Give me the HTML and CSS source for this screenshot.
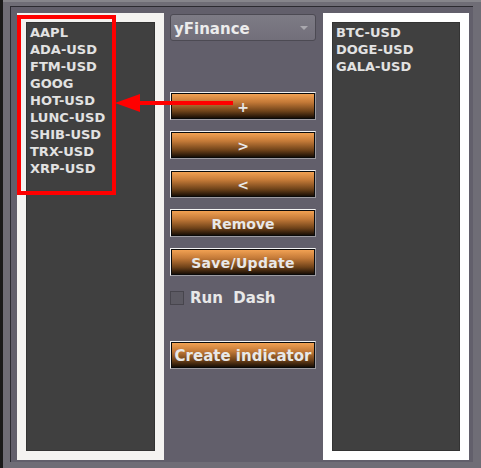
FILE: index.html
```html
<!DOCTYPE html>
<html>
<head>
<meta charset="utf-8">
<link rel="stylesheet" href="styles.css">
</head>
<body>
<div class="screen">
  <div class="edge"></div>
  <div class="frame">
    <div class="main">
      <div class="panel panel-left">
        <div class="list">
          <div>AAPL</div>
          <div>ADA-USD</div>
          <div>FTM-USD</div>
          <div>GOOG</div>
          <div>HOT-USD</div>
          <div>LUNC-USD</div>
          <div>SHIB-USD</div>
          <div>TRX-USD</div>
          <div>XRP-USD</div>
        </div>
      </div>
      <div class="middle">
        <div class="combo">
          <span>yFinance</span>
          <svg class="caret" width="8" height="5" viewBox="0 0 8 5"><polygon points="0,0 8,0 4,4" fill="#a9a8ae"/></svg>
        </div>
        <button class="btn first">+</button>
        <button class="btn">&gt;</button>
        <button class="btn">&lt;</button>
        <button class="btn">Remove</button>
        <button class="btn mono">Save/Update</button>
        <label class="check"><span class="box"></span><span>Run&nbsp; Dash</span></label>
        <button class="btn create">Create indicator</button>
      </div>
      <div class="panel panel-right">
        <div class="list">
          <div>BTC-USD</div>
          <div>DOGE-USD</div>
          <div>GALA-USD</div>
        </div>
      </div>
    </div>
  </div>
  <div class="redbox"></div>
  <div class="redline"></div>
  <svg class="redhead" width="26" height="20" viewBox="0 0 26 20"><polygon points="0,10 25,1 25,19" fill="#ff0000"/></svg>
</div>
</body>
</html>
```
FILE: styles.css
```css
html, body {
  margin: 0;
  padding: 0;
  background: #1c1c1c;
  overflow: hidden;
}
.screen {
  position: relative;
  width: 481px;
  height: 468px;
  display: flex;
}
.edge {
  width: 3px;
  background: #1a1a1a;
}
.frame {
  flex: 1;
  background: #6f6d76;
  border-top: 2px solid #86858b;
  padding: 4px 8px 6px 7px;
  display: flex;
}
.main {
  flex: 1;
  background: #625f6b;
  border-top: 1px solid #2b2a30;
  border-left: 1px solid #2b2a30;
  padding: 6px 3px 2px 6px;
  display: grid;
  grid-template-columns: 147px 146px 147px;
  column-gap: 6px;
}
.main > .panel-right { margin-left: 1px; }
.panel {
  padding: 9px;
  display: flex;
}
.panel-left { background: #f4f3f1; }
.panel-right { background: #ffffff; }
.list {
  flex: 1;
  background: #404040;
  border: 1px solid #333;
  padding: 1px 3px;
  font-family: "DejaVu Sans", sans-serif;
  font-weight: bold;
  font-size: 13px;
  line-height: 17px;
  color: #e2e2e2;
}
.middle {
  display: flex;
  flex-direction: column;
}
.combo {
  margin-top: 1px;
  height: 27px;
  box-sizing: border-box;
  border: 1px solid #4c4a53;
  border-radius: 3px;
  background: linear-gradient(#7d7b85, #726f7a);
  display: flex;
  align-items: center;
  justify-content: space-between;
  padding: 2px 7px 0 3px;
  font-family: "DejaVu Sans", sans-serif;
  font-weight: bold;
  font-size: 15px;
  color: #ececec;
}
.caret { margin-top: 0; }
.btn {
  height: 28px;
  box-sizing: border-box;
  margin: 11px 0 0 0;
  padding: 1px 0 0 0;
  border: 1px solid;
  border-color: #f2f2f2 #9c9aa0 #9c9aa0 #f2f2f2;
  box-shadow: inset 0 0 0 1px #0a0a0a;
  background: linear-gradient(#f7a656 0%, #c47a38 35%, #6e4219 70%, #0c0703 100%);
  font-family: "DejaVu Sans", sans-serif;
  font-weight: bold;
  font-size: 14px;
  color: #e8e8e8;
  text-align: center;
}
.btn.first { margin-top: 51px; }
.btn.mono { font-size: 14px; letter-spacing: 0.3px; }
.check {
  margin-top: 15px;
  display: flex;
  align-items: center;
  gap: 6px;
  height: 14px;
  font-family: "DejaVu Sans", sans-serif;
  font-weight: bold;
  font-size: 15px;
  color: #e8e8e8;
}
.box {
  width: 14px;
  height: 14px;
  box-sizing: border-box;
  border: 1px solid #47454d;
  background: #5c5a63;
}
.btn.create {
  margin-top: 36px;
  font-size: 15px;
  padding-top: 2px;
}
.redbox {
  position: absolute;
  left: 17px;
  top: 15px;
  width: 99px;
  height: 180px;
  box-sizing: border-box;
  border: 4px solid #ff0000;
}
.redline {
  position: absolute;
  left: 138px;
  top: 101px;
  width: 95px;
  height: 4px;
  background: #ff0000;
}
.redhead {
  position: absolute;
  left: 115px;
  top: 93px;
}
```
